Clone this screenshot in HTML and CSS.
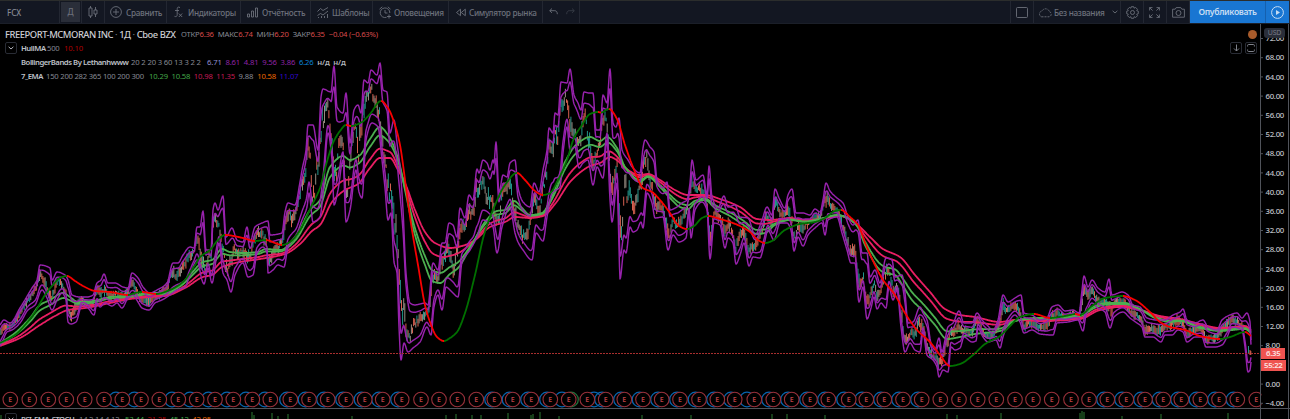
FILE: index.html
```
<!DOCTYPE html>
<html lang="ru">
<head>
    <meta charset="UTF-8">
    <meta name="viewport" content="width=device-width, initial-scale=1.0">
    <title>FCX 6.35</title>
    <link rel="stylesheet" href="styles.css">
</head>
<body>

<header class="toolbar">
    <div class="tool symbol">FCX</div>
    <div class="tool interval"><span>Д</span></div>
    <div class="tool chart-type">
        <svg width="10" height="12" viewBox="0 0 10 12"><path d="M2.5 0v2M2.5 10v2M1 2h3v8h-3zM7.5 1v3M7.5 8v3M6 4h3v4h-3z"/></svg>
    </div>
    <div class="tool compare">
        <svg width="12" height="12" viewBox="0 0 12 12"><circle cx="6" cy="6" r="5.4"/><path d="M6 3v6M3 6h6"/></svg>
        <span>Сравнить</span>
    </div>
    <div class="tool indicators">
        <svg width="9" height="12" viewBox="0 0 9 12"><path d="M6 1.5C3.5.3 3.2 2 3.2 3.5V8.500C3.200 10.500 2 11 .5 10.300M1 4.500h4M4.800 7.500l3.400 3.500M8.200 7.500l-3.400 3.500"/></svg>
        <span>Индикаторы</span>
    </div>
    <div class="tool report">
        <svg width="11" height="11" viewBox="0 0 11 11"><path d="M.5 7h2v3h-2zM4.500 4h2v6h-2zM8.500 1h2v9h-2z"/></svg>
        <span>Отчётность</span>
    </div>
    <div class="tool templates">
        <svg width="12" height="11" viewBox="0 0 12 11"><path d="M.5 4.500l3-3 2.500 2 5-3M.5 8.500l3-2 2.500 1.500 5-4M1.500 10v1M4.500 9v2M7.500 9v2M10.500 7v4"/></svg>
        <span>Шаблоны</span>
    </div>
    <div class="tool alerts">
        <svg width="13" height="13" viewBox="0 0 13 13"><path d="M10.800 7A4.800 4.800 0 1 0 7.500 11.300M6 4v3h2.500M.5 3.200L3.300.8M8.800.8l2.700 2.400M10 8.500v4M8 10.500h4"/></svg>
        <span>Оповещения</span>
    </div>
    <div class="tool replay">
        <svg width="10" height="9" viewBox="0 0 10 9"><path d="M4.500 1.200v6.500l-4-3.200zM9.300 1.200v6.500l-4-3.200z"/></svg>
        <span>Симулятор рынка</span>
    </div>
    <div class="tool history">
        <svg width="9" height="8" viewBox="0 0 9 8"><path d="M3 .5l-2.300 2.200 2.300 2.200M.8 2.700h5c1.800 0 2.500 1.500 2.500 3.500"/></svg>
        <svg class="disabled" width="9" height="8" viewBox="0 0 9 8"><path d="M6 .5l2.300 2.200-2.300 2.200M8.200 2.700h-5C1.400 2.700.7 4.200.7 6.200"/></svg>
    </div>
    <div class="spacer"></div>
    <div class="tool icon-tool">
        <svg width="12" height="11" viewBox="0 0 12 11"><rect x=".5" y=".5" width="11" height="10" rx="1"/></svg>
    </div>
    <div class="tool layout-name">
        <svg width="14" height="11" viewBox="0 0 14 11"><path stroke-dasharray="2 1" d="M3.500 9.800h7.500a2.700 2.700 0 0 0 .4-5.200A4 4 0 0 0 4 4 3 3 0 0 0 3.500 9.800z"/></svg>
        <span>Без названия</span>
        <svg width="6" height="4" viewBox="0 0 6 4"><path d="M.6.8L3 3 5.400.8"/></svg>
    </div>
    <div class="tool icon-tool">
        <svg width="13" height="13" viewBox="0 0 13 13"><path d="M5.300.7h2.400l.4 1.500 1.500-.8 1.900 1.900-.8 1.400 1.600.5v2.500l-1.600.5.8 1.500-1.800 1.800-1.500-.8-.5 1.600H5.300l-.5-1.600-1.500.8-1.800-1.800.8-1.500-1.600-.5V5.200l1.600-.5-.8-1.400 1.900-1.900 1.500.8z"/><circle cx="6.500" cy="6.500" r="2"/></svg>
    </div>
    <div class="tool icon-tool">
        <svg width="11" height="11" viewBox="0 0 11 11"><path d="M.6 3.500V.6h2.900M.6.6l3 3M7.500.6h2.900v2.900M10.400.6l-3 3M.6 7.500v2.900h2.900M.6 10.400l3-3M10.400 7.500v2.900H7.500M10.400 10.400l-3-3"/></svg>
    </div>
    <div class="tool icon-tool">
        <svg width="13" height="11" viewBox="0 0 13 11"><path d="M.6 2.200h2.600l1-1.600h4.600l1 1.600h2.600v8H.6z"/><circle cx="6.500" cy="6" r="2.500"/></svg>
    </div>
    <div class="publish">Опубликовать</div>
    <div class="play">
        <svg width="13" height="13" viewBox="0 0 13 13"><circle cx="6.500" cy="6.500" r="5.900"/><path class="solid" d="M5 4l4 2.500-4 2.500z"/></svg>
    </div>
</header>

<main class="chart">
    <svg id="plot" width="1290" height="395" viewBox="0 24 1290 395"></svg>

    <div class="legend">
        <div class="row title-row">
            <span class="title">FREEPORT-MCMORAN INC <i>·</i> 1Д <i>·</i> Cboe BZX</span>
            <span class="ohlc">ОТКР<b>6.36</b></span>
            <span class="ohlc">МАКС<b>6.74</b></span>
            <span class="ohlc">МИН<b>6.20</b></span>
            <span class="ohlc">ЗАКР<b>6.35</b></span>
            <span class="ohlc"><b>−0.04 (−0.63%)</b></span>
        </div>
        <div class="row">
            <span class="toggle"><svg width="6" height="4" viewBox="0 0 6 4"><path d="M.6.8L3 3 5.400.8"/></svg></span>
            <span class="name hull-name">HullMA</span><span class="params hull-params">500</span>
            <span class="val dark-red">10.10</span>
        </div>
        <div class="row indent">
            <span class="name bb-name">BollingerBands By Lethanhwww</span><span class="params bb-params">20 2 20 3 60 13 3 2 2</span>
            <span class="val lilac">6.71</span><span class="val purple">8.61</span><span class="val purple">4.81</span><span class="val purple">9.56</span><span class="val purple">3.86</span><span class="val blue">6.26</span><span class="val na">н/д</span><span class="val na">н/д</span>
        </div>
        <div class="row indent">
            <span class="name ema-name">7_EMA</span><span class="params ema-params">150 200 282 365 100 200 300</span>
            <span class="val wide green">10.29</span><span class="val wide green">10.58</span><span class="val wide pink">10.98</span><span class="val wide pink">11.35</span><span class="val wide gray w9">9.88</span><span class="val wide orange">10.58</span><span class="val wide indigo">11.07</span>
        </div>
    </div>

    <div class="currency">USD</div>
    <div class="dot"></div>
    <div class="pane-buttons">
        <span><svg width="7" height="8" viewBox="0 0 7 8"><path d="M3.500.5v6.500M1 4.500l2.500 2.500L6 4.500"/></svg></span>
        <span><svg width="8" height="8" viewBox="0 0 8 8"><path d="M.6 2.500v-1q0-1 1-1h4.800q1 0 1 1v1M.6 5.500v1q0 1 1 1h4.800q1 0 1-1v-1"/></svg></span>
    </div>
    <div class="price-tag last">6.35</div>
    <div class="price-tag timer">55:22</div>

    <div class="lower-pane">
        <span class="toggle"><svg width="6" height="4" viewBox="0 0 6 4"><path d="M.6.8L3 3 5.400.8"/></svg></span>
        <span class="name rsi-name">RSI_EMA_STOCH</span><span class="params rsi-params">14 2 14 4 12</span>
        <span class="val wide green">53.44</span><span class="val wide dark-red">21.25</span><span class="val wide green">45.12</span><span class="val wide orange">42.95</span>
    </div>
</main>

<script src="chart.js"></script>
</body>
</html>
```
FILE: styles.css
```
* {
    box-sizing: border-box;
}

body {
    margin: 0;
    width: 1290px;
    height: 419px;
    overflow: hidden;
    background: #000;
    font-family: 'Noto Sans', 'Open Sans', sans-serif;
    color: #b2b5be;
}

svg {
    display: block;
    flex: none;
    fill: none;
    stroke: currentColor;
}

/* Toolbar */
.toolbar {
    display: flex;
    height: 24px;
    border-top: 1px solid #2b2d2c;
    border-bottom: 1px solid #1b1f29;
    background: #131722;
    color: #6c707b;
    font-size: 8.2px;
    font-weight: 500;
    letter-spacing: -0.3px;
    white-space: nowrap;
}

.tool {
    display: flex;
    align-items: center;
    gap: 4px;
    padding-left: 5px;
    border-right: 1px solid #232732;
}

.tool svg {
    stroke-width: 0.9;
}

.symbol {
    width: 60px;
    padding-left: 7px;
    font-size: 8px;
    letter-spacing: 0;
    color: #868a94;
}

.interval {
    width: 22px;
    padding: 0 1px;
}

.interval span {
    width: 19px;
    height: 20px;
    line-height: 20px;
    text-align: center;
    background: #2a2e39;
}

.chart-type {
    width: 23px;
    padding-left: 6px;
}

.compare { width: 62px; }
.indicators { width: 74px; padding-left: 7px; }
.indicators span { margin-left: 1px; }
.report { width: 70px; padding-left: 6px; }
.templates { width: 62px; gap: 3px; padding-left: 6px; }
.alerts { width: 76px; gap: 2px; padding-left: 6px; }
.replay { width: 94px; padding-left: 7px; gap: 3px; }

.history {
    width: 37px;
    gap: 8px;
    padding-left: 6px;
}

.disabled {
    opacity: 0.4;
}

.spacer {
    flex: 1;
    border-right: 1px solid #232732;
}

.icon-tool {
    width: 23px;
}

.layout-name {
    width: 87px;
    gap: 2px;
    padding-left: 4px;
}

.layout-name span {
    width: 53px;
    margin-right: 3px;
}

.publish {
    width: 76px;
    line-height: 22px;
    text-align: center;
    background: #1976d2;
    border-right: 1px solid #1560ae;
    color: #c6dcf3;
    font-size: 8.6px;
    font-weight: 600;
    letter-spacing: -0.32px;
}

.play {
    width: 24px;
    display: flex;
    align-items: center;
    justify-content: center;
    background: #1976d2;
    color: #c6dcf3;
    border-right: 1px solid #202c40;
}

.solid {
    fill: currentColor;
    stroke: none;
}

/* Chart */
.chart {
    position: relative;
    height: 395px;
    overflow: hidden;
}

.legend {
    position: absolute;
    top: 3px;
    left: 5px;
    font-size: 7.7px;
    letter-spacing: -0.24px;
    white-space: nowrap;
}

.row {
    display: flex;
    align-items: center;
    height: 14px;
}

.indent {
    padding-left: 16px;
}

.title {
    width: 176px;
    font-size: 9.4px;
    font-weight: 500;
    letter-spacing: -0.45px;
    color: #cccdd2;
}

.title i {
    color: #6c6f78;
    font-style: normal;
}

.ohlc {
    margin-right: 4px;
    color: #868993;
}

.ohlc b {
    font-weight: 400;
    color: #d84b4b;
}

.toggle {
    display: flex;
    align-items: center;
    justify-content: center;
    width: 12px;
    height: 12px;
    margin-right: 4px;
    border: 1px solid #292c35;
    border-radius: 2px;
}

.name {
    font-weight: 600;
    letter-spacing: -0.46px;
    color: #bfc1c8;
}

.hull-name { width: 26px; }
.hull-params { width: 17px; }
.bb-name { width: 110px; }
.bb-params { width: 76px; letter-spacing: -0.16px; }
.ema-name { width: 25px; }
.ema-params { width: 103px; }
.rsi-name { width: 58px; letter-spacing: -0.55px; }
.rsi-params { width: 46px; }

.params {
    color: #868993;
}

.val {
    width: 18.4px;
    letter-spacing: -0.15px;
}

.wide {
    width: 22.4px;
}

.w9 { width: 18.6px; }

.na {
    width: 16px;
    font-weight: 600;
}

.dark-red { color: #b00000; }
.lilac { color: #8f8fce; }
.purple { color: #8f23a4; }
.blue { color: #0c85d8; }
.green { color: #43a648; }
.pink { color: #c21b55; }
.gray { color: #868993; }
.orange { color: #f06900; }
.indigo { color: #3109c8; }

.currency {
    position: absolute;
    top: 4px;
    left: 1264px;
    width: 21px;
    height: 10px;
    border-radius: 3px;
    background: #2a2e39;
    color: #787b86;
    font-size: 7px;
    letter-spacing: -0.2px;
    line-height: 10px;
    text-align: center;
}

.dot {
    position: absolute;
    top: 6px;
    left: 1248px;
    width: 9px;
    height: 9px;
    border-radius: 50%;
    background: #a85b2b;
}

.pane-buttons {
    position: absolute;
    top: 18px;
    left: 1230px;
    display: flex;
    gap: 3px;
    color: #80838c;
}

.pane-buttons span {
    display: flex;
    align-items: center;
    justify-content: center;
    width: 12px;
    height: 12px;
    border: 1px solid #292c35;
    border-radius: 2px;
}

.price-tag {
    position: absolute;
    left: 1261px;
    height: 11px;
    background: #ef5350;
    color: #fbe3e3;
    font-size: 7.8px;
    font-weight: 600;
    letter-spacing: -0.3px;
    line-height: 11px;
}

.last {
    top: 324px;
    width: 24px;
    padding-left: 5px;
}

.timer {
    top: 336px;
    width: 25px;
    padding-left: 3px;
}

.lower-pane {
    position: absolute;
    top: 388px;
    left: 5px;
    display: flex;
    align-items: center;
    height: 14px;
    font-size: 7.7px;
    letter-spacing: -0.24px;
    white-space: nowrap;
}

/* Plot */
.band {
    stroke: #9822ad;
    stroke-width: 1.45;
    stroke-linejoin: round;
}

.ema-green { stroke: #4caf50; stroke-width: 1.8; }
.ema-pink { stroke: #e91e63; stroke-width: 1.8; }
.hull-up { stroke: #007000; stroke-width: 1.8; }
.hull-down { stroke: #f80000; stroke-width: 1.8; }
.candle-up { stroke: #26a69a; stroke-width: 0.9; }
.candle-down { stroke: #ef6b59; stroke-width: 0.9; }
.candle-mid { stroke: #a89c91; stroke-width: 0.9; }
.last-line { stroke: #a82e2e; stroke-width: 1; stroke-dasharray: 2 1; }
.axis { stroke: #50535a; stroke-width: 1; }

.axis-label {
    fill: #c0c2c9;
    stroke: none;
    font-size: 7.8px;
    font-weight: 500;
    letter-spacing: -0.3px;
}

.earn {
    fill: #000;
    stroke: #97303a;
    stroke-width: 1.1;
}

.dividend {
    stroke: #0764ae;
    stroke-width: 1.3;
}

.split { stroke: #20703b; }

.earn-label {
    fill: #bd4046;
    stroke: none;
    font-size: 7px;
    font-weight: 600;
    text-anchor: middle;
}

.osc { stroke: #2f7a33; stroke-width: 1; }
```
FILE: chart.js
```
const plot = document.getElementById('plot');

const upper = [0,325,4,320,10,323,20,308,32,288,37,280,40,265,50,268,52,280,57,272,65,275,68,280,72,295,80,297,87,297,93,295,97,283,101,280,104,274,108,283,115,283,123,287,128,288,132,273,138,278,143,287,150,293,157,290,167,283,173,263,178,263,183,255,190,247,194,248,197,227,200,227,203,211,206,250,211,250,213,210,215,203,218,210,223,196,226,237,232,228,237,240,243,242,247,227,250,242,255,227,262,223,268,221,270,235,282,233,285,212,288,203,295,205,300,182,302,170,306,150,308,125,313,125,318,150,321,97,323,89,331,92,334,66,337,107,343,113,346,93,350,143,354,110,358,105,361,113,364,80,368,83,371,70,377,75,380,63,383,90,387,92,390,133,394,120,397,143,400,167,403,210,406,273,410,303,415,305,420,304,425,303,428,305,433,263,438,270,442,243,445,243,449,223,453,225,457,237,460,208,465,218,469,195,473,200,477,169,479,173,483,160,487,163,490,170,493,160,494,163,496,142,499,193,503,175,507,177,510,163,515,160,518,188,523,202,530,207,534,183,539,192,543,170,547,150,549,128,553,133,555,113,558,115,561,82,567,83,570,69,574,95,578,103,581,110,584,92,589,93,593,93,596,130,600,130,603,95,607,103,610,69,613,123,616,127,619,118,622,150,628,160,633,168,640,173,643,148,645,140,650,147,654,152,657,180,663,188,667,182,670,210,677,207,682,203,687,200,690,183,692,160,696,180,703,175,707,195,709,166,712,197,718,208,724,196,728,207,735,205,740,217,748,218,755,235,762,220,767,207,772,215,775,189,779,198,785,208,788,195,792,189,796,213,803,213,810,215,815,209,820,212,823,200,826,183,830,191,837,198,843,203,848,217,853,225,858,220,862,253,867,253,870,277,875,270,880,283,886,258,892,260,895,277,902,275,905,293,908,323,913,322,920,307,923,313,927,320,931,343,935,350,939,338,942,352,945,340,948,327,953,323,959,311,964,323,972,323,977,313,982,320,987,325,993,330,998,320,1001,303,1003,295,1008,302,1015,298,1021,295,1024,313,1032,315,1040,320,1047,318,1052,307,1058,305,1065,311,1073,310,1079,313,1082,290,1084,276,1088,287,1092,280,1098,288,1105,292,1109,279,1112,295,1122,292,1128,295,1133,305,1140,307,1147,318,1157,320,1165,320,1173,315,1180,312,1183,309,1187,320,1195,323,1203,320,1208,327,1217,330,1222,320,1230,315,1237,313,1242,318,1247,313,1250,322,1251,340];

const lower = [0,346,3,340,7,332,12,330,20,323,28,310,35,305,42,290,47,298,52,310,57,300,62,293,66,300,68,322,71,324,76,322,82,305,88,308,94,315,97,303,100,307,105,303,112,306,117,303,122,308,128,298,133,295,138,302,142,308,149,310,155,303,162,300,170,295,177,290,185,287,190,275,197,260,202,280,204,284,208,268,212,283,216,260,219,243,223,273,227,280,231,292,235,275,243,263,248,277,253,275,257,253,263,247,267,253,268,273,273,270,278,265,284,267,288,247,297,233,302,220,307,207,309,193,313,222,320,217,323,193,328,133,332,160,334,205,338,190,343,160,346,222,350,210,356,170,359,192,362,198,366,140,372,123,378,127,382,160,385,188,388,220,391,213,394,262,397,273,399,327,401,360,404,343,408,352,413,348,420,342,427,327,431,335,434,307,438,295,442,310,446,287,450,290,453,293,458,297,462,262,470,250,477,237,483,220,490,223,493,227,497,253,502,227,510,207,515,233,518,242,523,250,532,260,536,233,543,241,547,217,552,193,560,187,563,153,567,127,570,150,575,147,579,168,583,163,588,160,593,185,597,167,603,178,607,140,610,200,612,222,617,183,619,247,620,279,624,250,626,253,630,227,633,232,637,230,641,222,643,228,647,193,652,203,655,218,663,217,668,250,673,235,679,242,686,238,689,213,691,238,695,210,702,202,707,210,710,259,714,223,720,225,725,248,728,238,733,243,736,264,740,255,744,243,749,266,753,257,760,258,764,245,768,230,774,240,780,223,787,223,791,230,794,251,798,237,803,246,808,235,815,228,822,223,825,235,828,220,837,217,842,233,847,250,851,263,855,263,859,302,863,287,867,319,871,308,874,297,877,309,881,303,886,308,889,287,893,300,897,290,901,327,905,352,910,343,915,350,920,352,923,332,927,355,933,360,937,367,939,377,943,370,948,372,951,347,955,350,960,348,964,337,972,342,976,341,978,328,983,337,988,342,996,340,1000,348,1003,337,1008,323,1015,315,1020,322,1024,333,1032,330,1040,334,1053,335,1057,323,1068,322,1078,320,1083,331,1086,315,1092,303,1098,308,1105,312,1110,328,1114,317,1123,312,1130,318,1137,323,1142,327,1145,337,1153,337,1161,342,1165,335,1172,335,1178,330,1183,332,1187,342,1195,337,1202,337,1206,347,1215,347,1222,345,1227,337,1232,327,1242,330,1245,347,1248,372,1250,370,1251,362];

const fast = [0,343,15,333,30,318,40,305,50,300,63,293,70,297,78,302,93,301,110,297,130,296,150,293,165,293,180,285,190,275,203,262,212,260,222,249,230,252,243,253,258,252,266,249,280,250,295,238,310,210,320,200,330,167,343,156,350,160,360,155,370,139,380,127,388,135,398,158,405,190,415,235,425,265,432,281,440,283,450,274,458,268,470,248,485,222,497,211,505,210,514,201,522,208,530,215,542,213,552,196,565,162,577,144,590,137,600,141,607,137,617,148,625,167,640,182,648,177,660,187,670,198,680,207,688,209,695,203,705,200,715,208,730,216,745,226,757,234,765,233,775,225,790,220,805,222,820,219,837,215,848,218,857,226,865,245,880,270,885,273,895,275,903,286,912,300,922,310,935,325,947,339,960,337,975,334,1000,331,1015,321,1035,318,1055,318,1080,315,1095,306,1107,303,1125,303,1140,309,1155,318,1170,322,1180,321,1200,328,1220,331,1245,329,1251,333];

const slow = [0,346,20,338,40,325,55,316,68,310,85,308,110,303,130,299,150,297,165,296,185,288,203,277,212,275,222,267,240,262,260,259,285,254,300,244,312,231,320,225,332,202,345,190,358,184,370,168,380,158,390,158,398,170,405,183,415,210,425,232,435,243,450,248,462,246,475,240,490,227,505,222,515,217,530,218,543,216,555,204,570,182,582,171,590,166,600,163,610,157,618,161,625,168,640,175,648,174,660,180,675,190,688,195,705,195,720,199,740,207,757,219,770,220,790,218,805,220,820,219,840,216,855,223,870,237,883,249,900,257,915,275,930,292,945,309,960,315,975,317,1000,322,1015,320,1040,321,1080,319,1100,310,1120,307,1140,310,1160,316,1180,319,1200,324,1220,328,1245,326,1251,330];

const hull = [0,343,15,335,25,325,35,312,45,295,52,286,60,278,67,276,75,281,85,287,95,291,110,292,128,295,135,293,142,292,156,294,170,290,183,282,195,265,200,257,210,250,218,240,225,235,243,238,255,241,266,240,275,243,282,245,290,242,300,230,312,205,320,188,326,165,333,143,340,131,346,125,351,126,362,122,370,114,381,101,388,108,395,125,400,145,407,195,412,230,418,265,425,305,430,322,437,337,444,341,450,338,457,332,465,313,475,275,484,235,495,205,505,185,517,173,525,180,535,191,543,195,550,193,558,180,567,160,574,138,582,125,590,114,598,112,601,112.5,609,109,617,119,625,145,635,172,643,188,652,192,660,200,670,213,679,226,687,229,694,226,702,218,708,216,720,219,730,222,740,226,750,232,758,240,765,243,772,241,785,230,800,224,815,222,825,218,835,211,841,210,850,217,858,225,866,245,875,265,883,280,895,295,905,313,917,330,930,342,940,355,950,366,960,364,973,355,985,344,1000,336,1010,326,1020,317,1034,314,1050,318,1070,315,1075,314,1080,315,1092,306,1105,298,1123,296,1135,300,1150,312,1160,322,1170,327,1185,330,1200,336,1220,339,1230,337,1245,332,1251,336];

// Monotone cubic interpolation, keeps peaks where they are
function curve(flat) {
    const xs = flat.filter((v, i) => i % 2 === 0);
    const ys = flat.filter((v, i) => i % 2 === 1);
    const d = ys.slice(1).map((y, i) => (y - ys[i]) / (xs[i + 1] - xs[i]));
    const m = ys.map((y, i) => {
        if (i === 0) return d[0];
        if (i === ys.length - 1) return d[i - 1];
        return d[i - 1] * d[i] <= 0 ? 0 : 2 * d[i - 1] * d[i] / (d[i - 1] + d[i]);
    });
    return x => {
        let i = 0;
        while (i < xs.length - 2 && x > xs[i + 1]) i++;
        const h = xs[i + 1] - xs[i];
        const t = (x - xs[i]) / h;
        return ys[i] * (1 + 2 * t) * (1 - t) ** 2 + m[i] * h * t * (1 - t) ** 2
            + ys[i + 1] * t * t * (3 - 2 * t) + m[i + 1] * h * t * t * (t - 1);
    };
}

let svg = '';

function drawLine(fn, cls, from = 0, to = 1251) {
    let d = '';
    for (let x = from; x < to; x += 0.5) d += (d ? 'L' : 'M') + x + ' ' + fn(x).toFixed(1);
    d += 'L' + to + ' ' + fn(to).toFixed(1);
    svg += `<path class="${cls}" d="${d}"/>`;
}

const top1 = curve(upper);
const bottom1 = curve(lower);
const fastMa = curve(fast);
const slowMa = curve(slow);
const hullMa = curve(hull);
const mix = (a, b, t) => x => a(x) + (b(x) - a(x)) * t;

// Candles
let seed = 7;
function random() {
    seed = (seed * 16807) % 2147483647;
    return seed / 2147483647;
}

const mid = mix(top1, bottom1, 0.5);
for (let x = 0; x < 1244; x += 1.1) {
    const range = bottom1(x) - top1(x);
    const slope = mid(Math.min(1251, x + 4)) - mid(Math.max(0, x - 4));
    const offset = Math.max(-0.22, Math.min(0.22, slope / 60));
    const y = mid(x) + range * (offset + (random() - 0.5) * 0.16);
    const size = 1.5 + range * 0.06 * random() + random() * 3;
    const kind = random();
    const cls = kind < 0.35 ? 'candle-up' : kind < 0.72 ? 'candle-down' : 'candle-mid';
    svg += `<path class="${cls}" d="M${x.toFixed(1)} ${(y - size).toFixed(1)}v${(size * 2).toFixed(1)}"/>`;
}
svg += '<path class="candle-up" d="M1248.500 346v8"/><path class="candle-down" d="M1250 350v5M1250.800 351v4"/>';

drawLine(mix(fastMa, slowMa, 0.7), 'ema-pink');
drawLine(slowMa, 'ema-pink');
drawLine(fastMa, 'ema-green');
drawLine(mix(fastMa, slowMa, 0.27), 'ema-green');

drawLine(top1, 'band');
drawLine(bottom1, 'band');
drawLine(x => top1(x) + 1.5 + (bottom1(x) - top1(x)) * 0.14, 'band');
drawLine(x => bottom1(x) - 1.5 - (bottom1(x) - top1(x)) * 0.14, 'band');

// Hull MA changes colour at every turn
const turns = [0, 67, 128, 142, 156, 225, 255, 266, 282, 346, 351, 381, 444, 517, 543, 598, 601, 609, 687, 708, 765, 841, 950, 1034, 1050, 1075, 1080, 1123, 1220, 1245, 1251];
for (let i = 0; i < turns.length - 1; i++) {
    const falling = hullMa(turns[i + 1]) > hullMa(turns[i]);
    drawLine(hullMa, falling ? 'hull-down' : 'hull-up', turns[i], turns[i + 1]);
}

svg += '<path class="last-line" d="M0 353.500H1261"/>';

// Earnings and dividend marks
const earnings = [10.3, 29.3, 48.3, 66.3, 84.7, 104, 122.3, 141, 159.3, 178.3, 196.7, 215, 233.3, 252.3, 270.3, 290.3, 309, 327.7, 346, 364.7, 382.7, 401.7, 421, 439, 457.3, 476.3, 494.3, 512.7, 531.3, 550.3, 568.7, 587.3, 605.7, 624.3, 643, 661.7, 680, 699, 717.3, 734.7, 754.3, 773.3, 791.7, 810, 828.3, 848.7, 866.3, 884.3, 903, 921.7, 940.3, 959, 977.7, 996.3, 1015, 1033, 1051.7, 1071, 1089, 1107.3, 1126.3, 1145, 1163.3, 1181.3, 1200.3, 1219, 1237.3, 1256.3];
const dividends = [116, 134.5, 172, 190, 208.5, 227, 246, 265, 287, 305.5, 324, 343, 361.5, 379, 398, 492, 509.5, 528, 547, 562, 594, 602, 621, 639.5, 658, 677, 695.5, 714, 731, 747, 769, 788, 807, 825, 844, 862, 881, 899, 918, 1104, 1122, 1141, 1159.5, 1178, 1196.5, 1215, 1233.5];
dividends.forEach(x => {
    svg += `<circle class="dividend" cx="${x}" cy="399.500" r="7.300"/>`;
});
svg += '<circle class="dividend split" cx="571" cy="399.500" r="7.300"/>';
earnings.forEach(x => {
    svg += `<circle class="earn" cx="${x}" cy="399.500" r="7.300"/><text class="earn-label" x="${x}" y="402">E</text>`;
});

// Lower pane ticks
[[1, 3], [252, 6], [254, 3], [272, 5], [278, 2], [288, 4], [352, 2], [446, 3], [456, 4], [472, 3], [481, 3], [508, 5], [531, 3], [533, 4], [540, 6], [559, 2], [642, 3], [691, 3], [772, 4], [787, 4], [825, 3], [947, 4], [957, 3], [1001, 5], [1080, 5], [1082, 7], [1084, 6], [1122, 2], [1161, 4], [1228, 5]].forEach(([x, h]) => {
    svg += `<path class="osc" d="M${x} 419v${-h - 1}"/>`;
});

// Price scale
svg += '<path fill="#000" stroke="none" d="M1261.500 24H1290V408H1261.500z"/>';
svg += '<path class="axis" d="M1260.500 24V419M0 408.500H1290M1288.500 24V419"/>';
for (let i = 0; i < 20; i++) {
    const price = 72 - i * 4;
    const y = 38.5 + i * 19.2;
    const label = price < 0 ? '−4.00' : price.toFixed(2);
    svg += `<path class="axis" d="M1261 ${y.toFixed(1)}h2"/><text class="axis-label" x="1265.500" y="${(y + 2.6).toFixed(1)}">${label}</text>`;
}

plot.innerHTML = svg;
```
